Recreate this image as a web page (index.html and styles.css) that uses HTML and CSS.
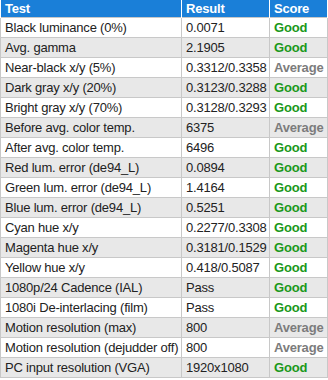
FILE: index.html
```html
<!DOCTYPE html>
<html>
<head>
<meta charset="utf-8">
<link rel="stylesheet" href="styles.css">
</head>
<body>
<table class="results">
  <colgroup>
    <col class="c-test">
    <col class="c-result">
    <col class="c-score">
  </colgroup>
  <thead>
    <tr><th>Test</th><th>Result</th><th>Score</th></tr>
  </thead>
  <tbody>
    <tr><td>Black luminance (0%)</td><td>0.0071</td><td class="good">Good</td></tr>
    <tr><td>Avg. gamma</td><td>2.1905</td><td class="good">Good</td></tr>
    <tr><td>Near-black x/y (5%)</td><td>0.3312/0.3358</td><td class="avg">Average</td></tr>
    <tr><td>Dark gray x/y (20%)</td><td>0.3123/0.3288</td><td class="good">Good</td></tr>
    <tr><td>Bright gray x/y (70%)</td><td>0.3128/0.3293</td><td class="good">Good</td></tr>
    <tr><td>Before avg. color temp.</td><td>6375</td><td class="avg">Average</td></tr>
    <tr><td>After avg. color temp.</td><td>6496</td><td class="good">Good</td></tr>
    <tr><td>Red lum. error (de94_L)</td><td>0.0894</td><td class="good">Good</td></tr>
    <tr><td>Green lum. error (de94_L)</td><td>1.4164</td><td class="good">Good</td></tr>
    <tr><td>Blue lum. error (de94_L)</td><td>0.5251</td><td class="good">Good</td></tr>
    <tr><td>Cyan hue x/y</td><td>0.2277/0.3308</td><td class="good">Good</td></tr>
    <tr><td>Magenta hue x/y</td><td>0.3181/0.1529</td><td class="good">Good</td></tr>
    <tr><td>Yellow hue x/y</td><td>0.418/0.5087</td><td class="good">Good</td></tr>
    <tr><td>1080p/24 Cadence (IAL)</td><td>Pass</td><td class="good">Good</td></tr>
    <tr><td>1080i De-interlacing (film)</td><td>Pass</td><td class="good">Good</td></tr>
    <tr><td>Motion resolution (max)</td><td>800</td><td class="avg">Average</td></tr>
    <tr><td>Motion resolution (dejudder off)</td><td>800</td><td class="avg">Average</td></tr>
    <tr><td>PC input resolution (VGA)</td><td>1920x1080</td><td class="good">Good</td></tr>
  </tbody>
</table>
</body>
</html>
```
FILE: styles.css
```css
html, body {
  margin: 0;
  padding: 0;
  background: #ffffff;
}
.results {
  border-collapse: collapse;
  width: 327px;
  table-layout: fixed;
  font-family: "Liberation Sans", Arial, sans-serif;
  font-size: 13px;
  letter-spacing: -0.2px;
  color: #222222;
}
.c-test { width: 181px; }
.c-result { width: 88px; }
.c-score { width: 58px; }
.results th {
  background: #1a7fd8;
  color: #ffffff;
  font-weight: bold;
  text-align: left;
  height: 17px;
  padding: 0 3px 0 4px;
  line-height: 15px;
  border-left: 1px solid #ffffff;
  border-right: 1px solid #ffffff;
}
.results td {
  height: 19px;
  padding: 0 2px 0 4px;
  line-height: 15px;
  border: 1px solid #c8c8c8;
  white-space: nowrap;
  overflow: hidden;
}
.results tbody tr:nth-child(even) td {
  background: #e8e8e8;
}
.results td.good {
  color: #1a981a;
  font-weight: bold;
}
.results td.avg {
  color: #7c7c7c;
  font-weight: bold;
}
```
